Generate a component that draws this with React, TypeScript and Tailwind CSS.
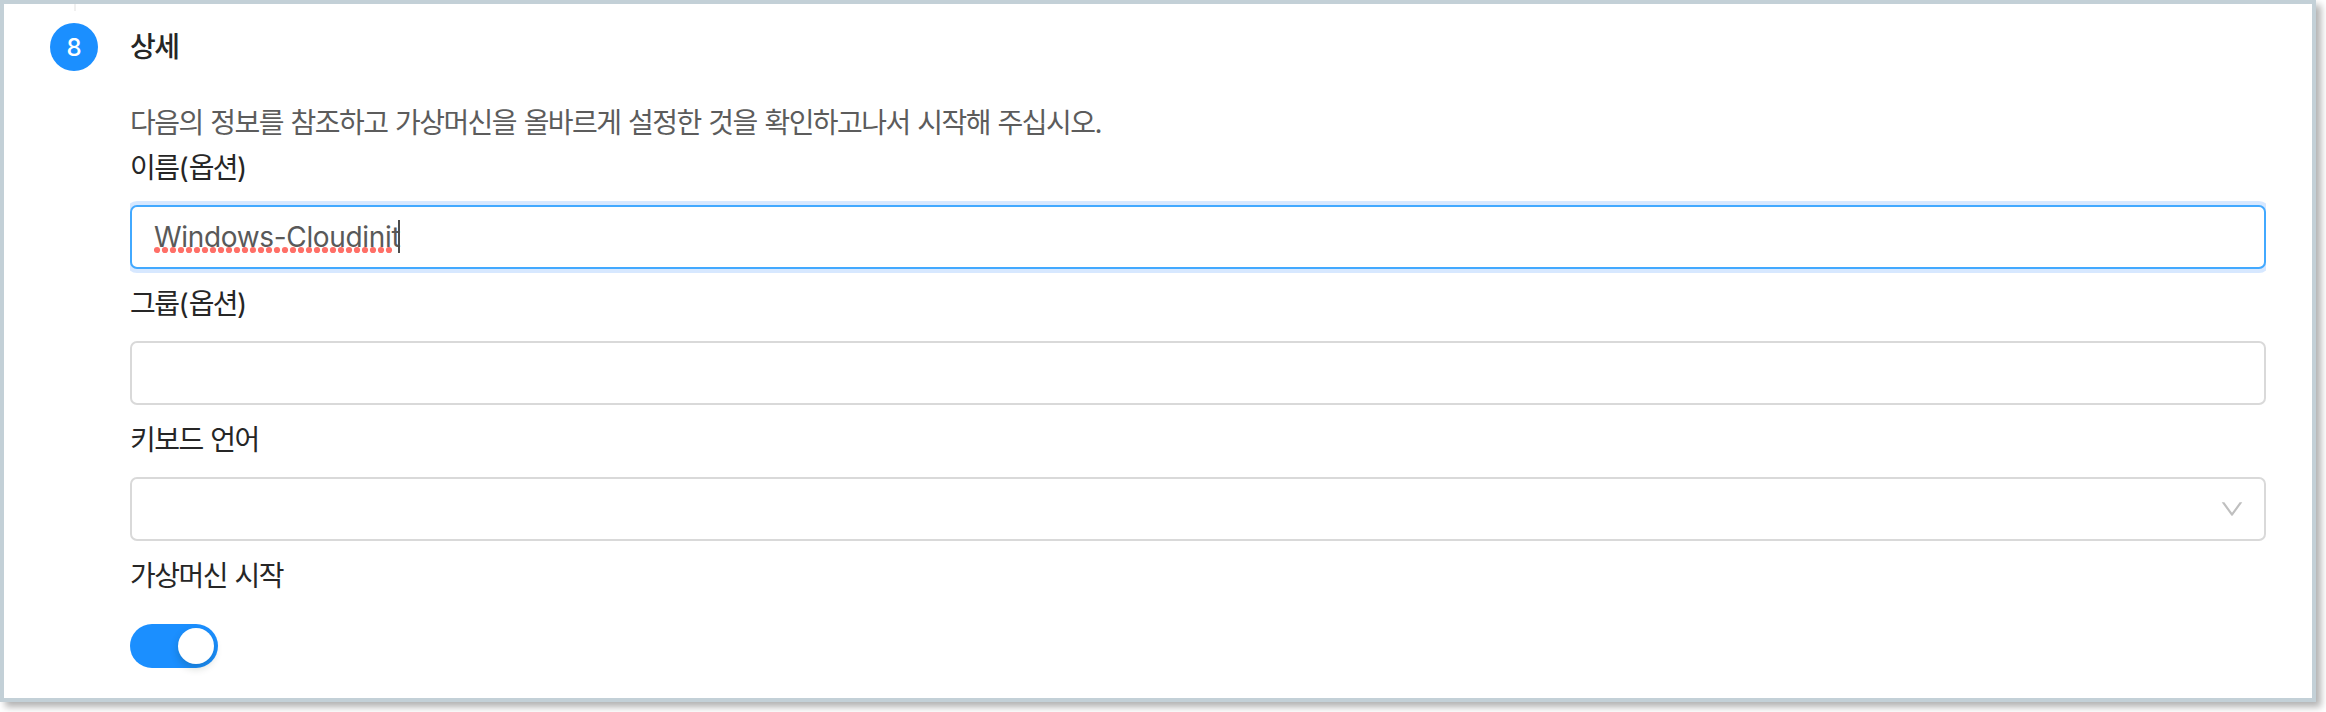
import type { ReactNode } from "react";

const korean =
  "font-['Inter','Noto_Sans_CJK_KR',sans-serif] text-[28px] leading-[44px] tracking-[-1.55px] [word-spacing:1.3px] whitespace-nowrap";

function Field({ label, children }: { label: ReactNode; children: ReactNode }) {
  return (
    <div className="flex h-[136px] flex-col">
      <div className={`h-[60px] pt-px text-[#262626] ${korean}`}>{label}</div>
      {children}
    </div>
  );
}

function Optional({ name }: { name: string }) {
  return (
    <>
      {name}
      <span className="tracking-[0px]">(</span>
      옵션)
    </>
  );
}

function SpellingMark() {
  return (
    <svg className="absolute top-[31px] left-[-1px]" width="240" height="8" aria-hidden="true">
      {Array.from({ length: 30 }, (_, i) => (
        <circle key={i} cx={3 + i * 8} cy="4" r="3.1" fill="#ff6f67" />
      ))}
    </svg>
  );
}

function DownIcon() {
  return (
    <svg width="24" height="24" viewBox="64 64 896 896" fill="#bfbfbf" aria-hidden="true">
      <path d="M884 256h-75c-5.1 0-9.9 2.5-12.9 6.6L512 654.2 227.9 262.6c-3-4.1-7.8-6.6-12.9-6.6h-75c-6.5 0-10.3 7.4-6.5 12.7l352.6 486.1c12.8 17.6 39 17.6 51.7 0l352.6-486.1c3.9-5.3.1-12.7-6.4-12.7z" />
    </svg>
  );
}

export default function App() {
  return (
    <div className="h-[712px] w-[2326px] overflow-hidden bg-white">
      <div className="flex h-[702px] w-[2316px] border-4 border-[#c3d0d7] bg-white pl-[46px] shadow-[5px_5px_7px_rgba(0,0,0,0.3)]">
        <div className="flex w-[48px] shrink-0 flex-col items-center">
          <div className="mb-3 ml-[2px] h-[7px] w-[2px] bg-[#f0f0f0]" />
          <div className="flex size-12 items-center justify-center rounded-full bg-[#1b8fff] pt-px font-['Inter',sans-serif] text-[24px] leading-none font-medium text-white">
            8
          </div>
        </div>
        <div className="ml-8 flex w-[2136px] flex-col">
          <div className={`mt-[21px] h-[76px] font-medium text-[#262626] ${korean}`}>상세</div>
          <div className={`h-[42px] text-[#5c5c5c] ${korean}`}>
            다음의 정보를 참조하고 가상머신을 올바르게 설정한 것을 확인하고나서 시작해 주십시오.
          </div>
          <div className="mt-[2px]">
            <Field label={<Optional name="이름" />}>
              <div className="overflow-x-clip">
                <div className="flex h-[64px] items-center rounded-[7px] border-2 border-[#42a9ff] bg-white pl-[23px] shadow-[0_0_0_4px_#d7e8ff]">
                  <div className="relative flex h-[44px] items-center font-['Inter',sans-serif] text-[28px] leading-[44px] text-[#595959]">
                    <span className="-ml-px tracking-[-0.33px]">Windows-Cloudinit</span>
                    <div className="absolute top-[5px] left-[243px] h-[33px] w-[2px] bg-[#4c4c4c]" />
                    <SpellingMark />
                  </div>
                </div>
              </div>
            </Field>
            <Field label={<Optional name="그룹" />}>
              <div className="h-[64px] rounded-[7px] border-2 border-[#d9d9d9] bg-white" />
            </Field>
            <Field label="키보드 언어">
              <div className="flex h-[64px] items-center justify-end rounded-[7px] border-2 border-[#d9d9d9] bg-white pr-5">
                <DownIcon />
              </div>
            </Field>
            <Field label="가상머신 시작">
              <div className="mt-[11px] flex h-[44px] w-[88px] shrink-0 items-center justify-end rounded-full bg-[#1b8fff] pr-1">
                <div className="size-9 rounded-full bg-white shadow-[0_4px_8px_rgba(0,35,11,0.2)]" />
              </div>
            </Field>
          </div>
        </div>
      </div>
    </div>
  );
}
